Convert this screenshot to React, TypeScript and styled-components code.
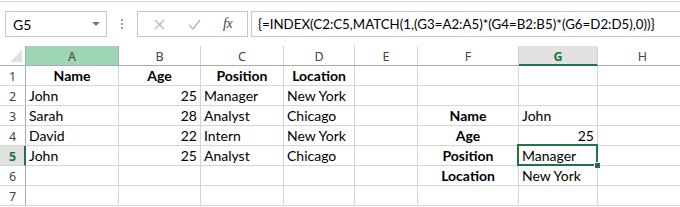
import React from "react";
import styled, { createGlobalStyle, css } from "styled-components";

const GlobalStyle = createGlobalStyle`
  html, body { margin: 0; padding: 0; background: #fff; }
  body { font-family: Lato, "Open Sans", sans-serif; overflow: hidden; }
`;

const Page = styled.div`
  width: 680px;
  height: 207px;
  overflow: hidden;
  background: #fff;
`;

const FormulaArea = styled.div`
  margin-top: 1px;
  border-top: 1px solid #d4d4d4;
  height: 45px;
  padding-top: 9px;
  box-sizing: border-box;
  display: flex;
  align-items: flex-start;
`;

const NameBox = styled.div`
  margin-left: 5px;
  width: 102px;
  height: 26px;
  box-sizing: border-box;
  border: 1px solid #c6c6c6;
  display: flex;
  align-items: center;
  justify-content: space-between;
  padding: 0 6px 0 7px;
  font-size: 14px;
  color: #000;
`;

const Caret = styled.span`
  width: 0;
  height: 0;
  border-left: 4px solid transparent;
  border-right: 4px solid transparent;
  border-top: 4px solid #777;
`;

const Dots = styled.div`
  width: 30px;
  height: 26px;
  display: flex;
  flex-direction: column;
  align-items: center;
  justify-content: center;
  gap: 2px;
  span {
    width: 2px;
    height: 2px;
    background: #9a9a9a;
  }
`;

const ButtonGroup = styled.div`
  width: 111px;
  height: 26px;
  box-sizing: border-box;
  border: 1px solid #c6c6c6;
  display: flex;
  align-items: center;
  padding-left: 16px;
`;

const BarButton = styled.div<{ $w: number }>`
  width: ${(p) => p.$w}px;
  height: 24px;
  display: flex;
  align-items: center;
  justify-content: flex-start;
`;

const Fx = styled.span`
  font-family: "Liberation Serif", serif;
  font-style: italic;
  font-size: 14px;
  color: #444;
  letter-spacing: -0.5px;
`;

const FormulaInput = styled.div`
  margin-left: 3px;
  flex: 1;
  height: 26px;
  box-sizing: border-box;
  border: 1px solid #c6c6c6;
  border-right: none;
  padding-left: 6px;
  display: flex;
  align-items: center;
  font-size: 13.3px;
  color: #000;
  white-space: nowrap;
`;

const COLS = [26, 93, 82, 83, 71, 63, 101, 79, 90];

const Grid = styled.div`
  display: grid;
  grid-template-columns: ${COLS.map((c) => c + "px").join(" ")};
  grid-template-rows: 20px repeat(7, 20px);
  position: relative;
`;

const Corner = styled.div`
  box-sizing: border-box;
  border-right: 1px solid #ababab;
  border-bottom: 1px solid #ababab;
  position: relative;
  &::after {
    content: "";
    position: absolute;
    right: 3px;
    bottom: 3px;
    width: 0;
    height: 0;
    border-left: 12px solid transparent;
    border-bottom: 12px solid #dfdfdf;
  }
`;

const ColHead = styled.div<{ $state?: "sel" | "active" }>`
  box-sizing: border-box;
  border-right: 1px solid #d4d4d4;
  border-bottom: 1px solid #ababab;
  display: flex;
  align-items: center;
  justify-content: center;
  font-family: "Noto Sans", "Open Sans", sans-serif;
  font-size: 12.5px;
  color: #444;
  padding-top: 1px;
  ${(p) =>
    p.$state === "sel" &&
    css`
      background: #9fd5b7;
      border-right-color: #ababab;
    `}
  ${(p) =>
    p.$state === "active" &&
    css`
      background: #e1e1e1;
      border-bottom: 2px solid #217346;
      color: #217346;
      font-weight: 700;
      padding-top: 2px;
    `}
`;

const RowHead = styled.div<{ $active?: boolean }>`
  box-sizing: border-box;
  border-right: 1px solid #ababab;
  border-bottom: 1px solid #d4d4d4;
  display: flex;
  align-items: center;
  justify-content: center;
  font-family: "Noto Sans", "Open Sans", sans-serif;
  font-size: 12.5px;
  color: #444;
  padding-top: 1px;
  ${(p) =>
    p.$active &&
    css`
      background: #e1e1e1;
      border-right: 2px solid #217346;
      color: #217346;
      font-weight: 700;
      padding-left: 1px;
    `}
`;

const Cell = styled.div<{ $align?: "left" | "right" | "center"; $bold?: boolean }>`
  box-sizing: border-box;
  border-right: 1px solid #d4d4d4;
  border-bottom: 1px solid #d4d4d4;
  display: flex;
  align-items: flex-end;
  justify-content: ${(p) =>
    p.$align === "right" ? "flex-end" : p.$align === "center" ? "center" : "flex-start"};
  padding: 0 3px 0 3px;
  font-size: 14px;
  line-height: 18px;
  color: #000;
  font-weight: ${(p) => (p.$bold ? 700 : 400)};
  white-space: nowrap;
  overflow: visible;
`;

const Selection = styled.div`
  position: absolute;
  box-sizing: border-box;
  border: 2px solid #217346;
  pointer-events: none;
  &::after {
    content: "";
    position: absolute;
    right: -5px;
    bottom: -5px;
    width: 5px;
    height: 5px;
    background: #217346;
    border: 1px solid #fff;
  }
`;

type CellDef = { v?: string; a?: "left" | "right" | "center"; b?: boolean };

const L = (v: string): CellDef => ({ v, a: "left" });
const R = (v: string): CellDef => ({ v, a: "right" });
const B = (v: string): CellDef => ({ v, a: "center", b: true });
const E: CellDef = {};

const rows: CellDef[][] = [
  [B("Name"), B("Age"), B("Position"), B("Location"), E, E, E, E],
  [L("John"), R("25"), L("Manager"), L("New York"), E, E, E, E],
  [L("Sarah"), R("28"), L("Analyst"), L("Chicago"), E, B("Name"), L("John"), E],
  [L("David"), R("22"), L("Intern"), L("New York"), E, B("Age"), R("25"), E],
  [L("John"), R("25"), L("Analyst"), L("Chicago"), E, B("Position"), L("Manager"), E],
  [E, E, E, E, E, B("Location"), L("New York"), E],
  [E, E, E, E, E, E, E, E],
];

const letters = ["A", "B", "C", "D", "E", "F", "G", "H"];

export default function App() {
  const selLeft = COLS.slice(0, 7).reduce((a, b) => a + b, 0) - 2;
  const selTop = 20 + 4 * 20 - 2;
  return (
    <Page>
      <GlobalStyle />
      <FormulaArea>
        <NameBox>
          <span>G5</span>
          <Caret />
        </NameBox>
        <Dots>
          <span />
          <span />
          <span />
        </Dots>
        <ButtonGroup>
          <BarButton $w={34}>
            <svg width="11" height="11" viewBox="0 0 11 11">
              <path d="M1 1 L10 10 M10 1 L1 10" stroke="#b5b5b5" strokeWidth="1.3" fill="none" />
            </svg>
          </BarButton>
          <BarButton $w={35}>
            <svg width="13" height="11" viewBox="0 0 13 11">
              <path d="M1 6 L5 10 L12 1" stroke="#b5b5b5" strokeWidth="1.4" fill="none" />
            </svg>
          </BarButton>
          <BarButton $w={20}>
            <Fx>fx</Fx>
          </BarButton>
        </ButtonGroup>
        <FormulaInput>{"{=INDEX(C2:C5,MATCH(1,(G3=A2:A5)*(G4=B2:B5)*(G6=D2:D5),0))}"}</FormulaInput>
      </FormulaArea>
      <Grid>
        <Corner />
        {letters.map((l, i) => (
          <ColHead key={l} $state={i === 0 ? "sel" : i === 6 ? "active" : undefined}>
            {l}
          </ColHead>
        ))}
        {rows.map((r, ri) => (
          <React.Fragment key={ri}>
            <RowHead $active={ri === 4}>{ri + 1}</RowHead>
            {r.map((c, ci) => (
              <Cell key={ci} $align={c.a} $bold={c.b}>
                {c.v}
              </Cell>
            ))}
          </React.Fragment>
        ))}
        <Selection style={{ left: selLeft, top: selTop, width: COLS[7] + 2, height: 22 }} />
      </Grid>
    </Page>
  );
}
